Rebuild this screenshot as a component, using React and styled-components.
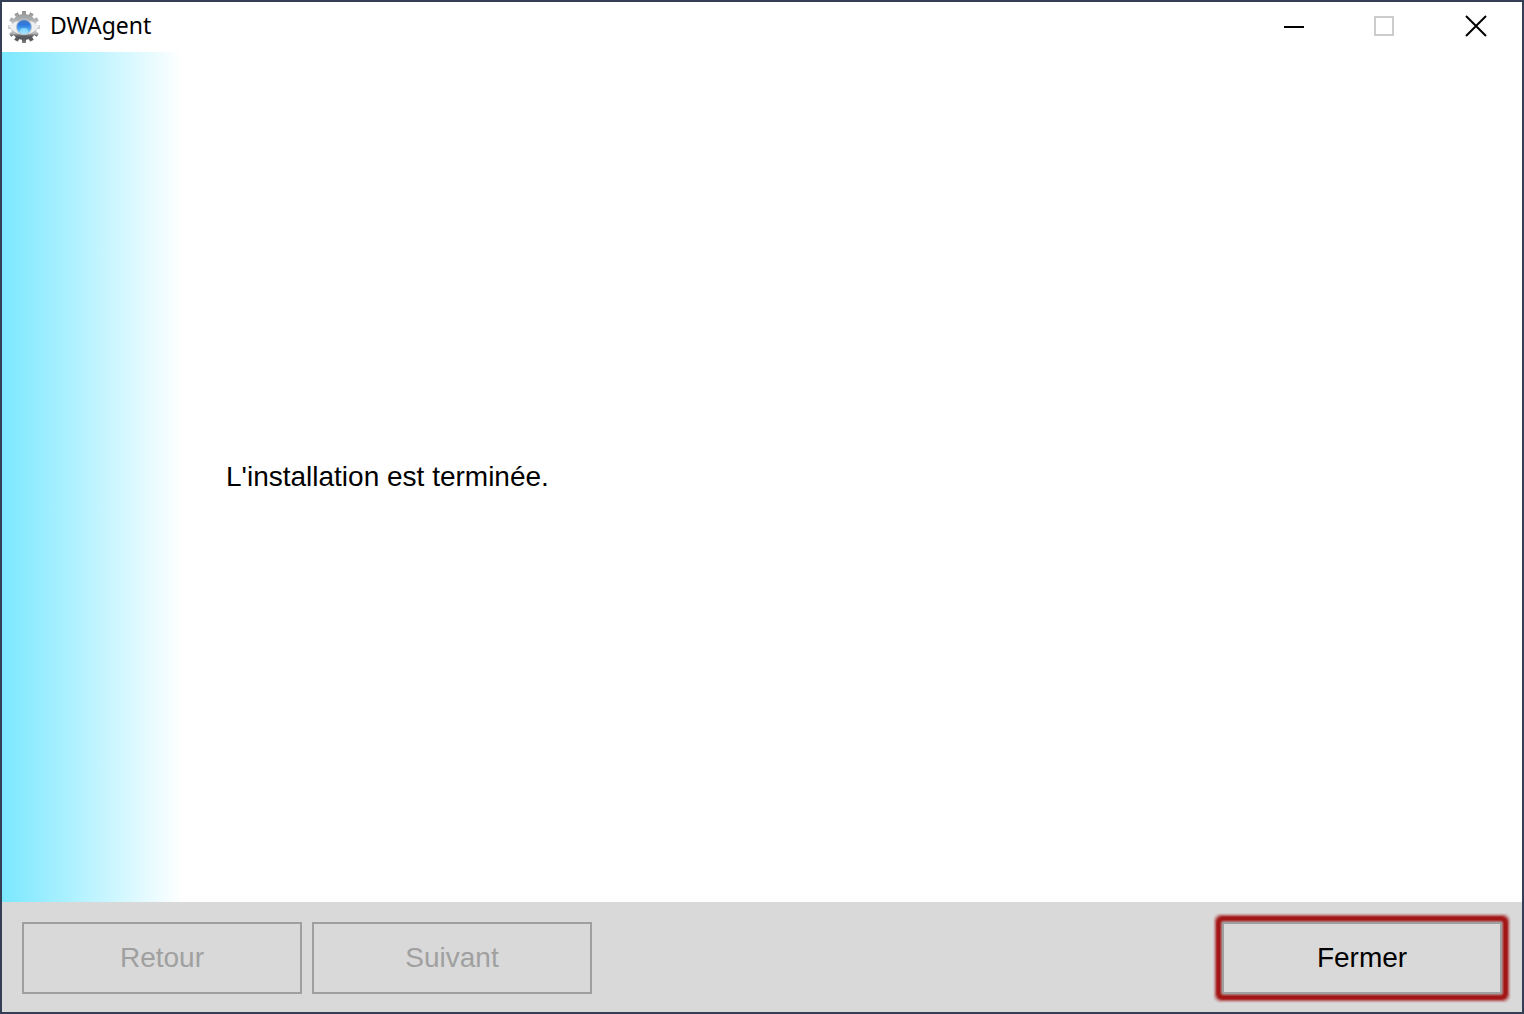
import React from "react";
import styled, { createGlobalStyle } from "styled-components";

const teeth = [0, 30, 60, 90, 120, 150, 180, 210, 240, 270, 300, 330];

const GearLogo = () => (
  <svg width="32" height="32" viewBox="0 0 32 32" aria-hidden="true">
    <defs>
      <linearGradient id="steel" x1="0" y1="0" x2="0" y2="1">
        <stop offset="0" stopColor="#8f9193" />
        <stop offset="0.3" stopColor="#b0b2b4" />
        <stop offset="0.45" stopColor="#d4d5d6" />
        <stop offset="0.7" stopColor="#b4b5b6" />
        <stop offset="0.78" stopColor="#5c5e60" />
        <stop offset="0.88" stopColor="#54565a" />
        <stop offset="1" stopColor="#85878a" />
      </linearGradient>
      <linearGradient id="glow" x1="0" y1="0" x2="0" y2="1">
        <stop offset="0" stopColor="#4a78c4" />
        <stop offset="0.35" stopColor="#2c7ae0" />
        <stop offset="0.7" stopColor="#52aef6" />
        <stop offset="1" stopColor="#a4e6ff" />
      </linearGradient>
      <mask id="gearShape">
        {teeth.map((angle) => (
          <rect
            key={angle}
            x="14"
            y="0"
            width="4"
            height="6"
            fill="#fff"
            transform={`rotate(${angle} 16 16)`}
          />
        ))}
        <circle cx="16" cy="16" r="13" fill="#fff" />
      </mask>
    </defs>
    <rect width="32" height="32" fill="url(#steel)" mask="url(#gearShape)" />
    <path d="M1 15 Q8 9 16 9 Q24 9 31 15 Q26 23 16 24 Q6 23 1 15Z" fill="#eeeff0" />
    <circle cx="16" cy="16" r="8" fill="#b4bfce" />
    <circle cx="16" cy="16" r="7" fill="url(#glow)" />
    <ellipse cx="16" cy="20" rx="4" ry="3" fill="#9fe6ff" opacity="0.7" />
  </svg>
);

const MinimizeIcon = () => (
  <svg width="24" height="24" viewBox="0 0 24 24" aria-hidden="true">
    <path d="M4 12H24" stroke="#000" strokeWidth="2" />
  </svg>
);

const MaximizeIcon = () => (
  <svg width="24" height="24" viewBox="0 0 24 24" aria-hidden="true">
    <rect x="3" y="2" width="18" height="18" fill="none" stroke="#ccc" strokeWidth="2" />
  </svg>
);

const CloseIcon = () => (
  <svg width="24" height="24" viewBox="0 0 24 24" aria-hidden="true">
    <path d="M2 1L22 21M22 1L2 21" stroke="#000" strokeWidth="2" />
  </svg>
);

const App = () => {
  return (
    <Window>
      <GlobalStyle />
      <TitleBar>
        <GearLogo />
        <Title>DWAgent</Title>
        <CaptionButton type="button" aria-label="Réduire">
          <MinimizeIcon />
        </CaptionButton>
        <CaptionButton type="button" aria-label="Agrandir" disabled>
          <MaximizeIcon />
        </CaptionButton>
        <CaptionButton type="button" aria-label="Fermer la fenêtre">
          <CloseIcon />
        </CaptionButton>
      </TitleBar>
      <Content>
        <SideBand />
        <Message>L'installation est terminée.</Message>
      </Content>
      <Footer>
        <ButtonGroup>
          <WizardButton type="button" disabled>
            Retour
          </WizardButton>
          <WizardButton type="button" disabled>
            Suivant
          </WizardButton>
        </ButtonGroup>
        <WizardButton type="button" $highlight>
          Fermer
        </WizardButton>
      </Footer>
    </Window>
  );
};

//Styles
const GlobalStyle = createGlobalStyle`
  * {
    box-sizing: border-box;
  }
  body {
    margin: 0;
    font-family: "Liberation Sans", Arial, sans-serif;
  }
`;

const Window = styled.div`
  display: flex;
  flex-direction: column;
  min-height: 100vh;
  background: #fff;
  border: 2px solid #343e54;
`;

const TitleBar = styled.header`
  display: flex;
  align-items: center;
  height: 50px;
  padding-left: 6px;
`;

const Title = styled.h1`
  flex: 1;
  margin: 0;
  padding-left: 10px;
  font-family: "Noto Sans", "Open Sans", sans-serif;
  font-size: 23px;
  line-height: 46px;
  height: 50px;
  font-weight: 400;
  color: #000;
`;

const CaptionButton = styled.button`
  display: flex;
  align-items: center;
  justify-content: center;
  width: 92px;
  height: 50px;
  padding: 0;
  border: none;
  background: none;
`;

const Content = styled.main`
  display: flex;
  flex: 1;
  align-items: center;
`;

const SideBand = styled.div`
  align-self: stretch;
  width: 180px;
  background: linear-gradient(to right, #7be8ff, #fff);
`;

const Message = styled.p`
  margin: 0;
  padding-left: 44px;
  font-size: 28px;
  line-height: 32px;
  color: #000;
`;

const Footer = styled.footer`
  display: flex;
  justify-content: space-between;
  padding: 20px 20px 18px;
  background: #d9d9d9;
`;

const ButtonGroup = styled.div`
  display: flex;
  gap: 10px;
`;

const WizardButton = styled.button`
  width: 280px;
  height: 72px;
  padding: 0;
  font-family: inherit;
  font-size: 28px;
  color: #000;
  background: #d9d9d9;
  border: 2px solid #9f9f9f;
  box-shadow: ${(props) =>
    props.$highlight
      ? "0 0 0 1px #b06a6a, 0 0 0 2px #a83c3c, 0 0 0 5px #a31616, 0 0 0 6px #ac3636, 0 0 0 7px #bb7070, 0 0 0 8px #c9a3a3, 0 0 0 9px #d4c7c7"
      : "none"};
  border-radius: ${(props) => (props.$highlight ? "2px" : "0")};
  &:disabled {
    color: #a0a0a0;
  }
`;

export default App;
